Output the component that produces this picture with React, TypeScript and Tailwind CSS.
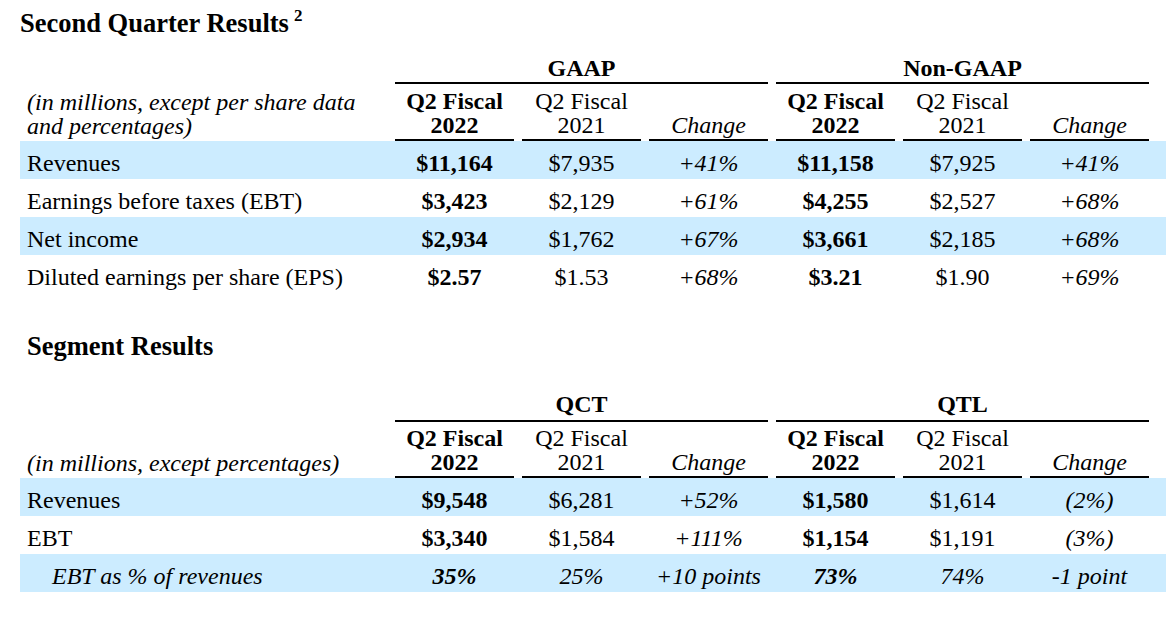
type Cell = { v: string; b?: boolean; i?: boolean };
type Row = { label: string; italic?: boolean; indent?: boolean; hl: boolean; cells: Cell[] };

const GRID = 'grid grid-cols-[367px_repeat(6,119px)] gap-x-2';

const quarterRows: Row[] = [
  {
    label: 'Revenues',
    hl: true,
    cells: [
      { v: '$11,164', b: true }, { v: '$7,935' }, { v: '+41%', i: true },
      { v: '$11,158', b: true }, { v: '$7,925' }, { v: '+41%', i: true },
    ],
  },
  {
    label: 'Earnings before taxes (EBT)',
    hl: false,
    cells: [
      { v: '$3,423', b: true }, { v: '$2,129' }, { v: '+61%', i: true },
      { v: '$4,255', b: true }, { v: '$2,527' }, { v: '+68%', i: true },
    ],
  },
  {
    label: 'Net income',
    hl: true,
    cells: [
      { v: '$2,934', b: true }, { v: '$1,762' }, { v: '+67%', i: true },
      { v: '$3,661', b: true }, { v: '$2,185' }, { v: '+68%', i: true },
    ],
  },
  {
    label: 'Diluted earnings per share (EPS)',
    hl: false,
    cells: [
      { v: '$2.57', b: true }, { v: '$1.53' }, { v: '+68%', i: true },
      { v: '$3.21', b: true }, { v: '$1.90' }, { v: '+69%', i: true },
    ],
  },
];

const segmentRows: Row[] = [
  {
    label: 'Revenues',
    hl: true,
    cells: [
      { v: '$9,548', b: true }, { v: '$6,281' }, { v: '+52%', i: true },
      { v: '$1,580', b: true }, { v: '$1,614' }, { v: '(2%)', i: true },
    ],
  },
  {
    label: 'EBT',
    hl: false,
    cells: [
      { v: '$3,340', b: true }, { v: '$1,584' }, { v: '+111%', i: true },
      { v: '$1,154', b: true }, { v: '$1,191' }, { v: '(3%)', i: true },
    ],
  },
  {
    label: 'EBT as % of revenues',
    italic: true,
    indent: true,
    hl: true,
    cells: [
      { v: '35%', b: true, i: true }, { v: '25%', i: true }, { v: '+10 points', i: true },
      { v: '73%', b: true, i: true }, { v: '74%', i: true }, { v: '-1 point', i: true },
    ],
  },
];

function GroupHeader({ left, right, pb }: { left: string; right: string; pb: string }) {
  return (
    <div className={GRID}>
      <div />
      <div className={`col-span-3 border-b-2 border-black text-center font-bold leading-[24px] ${pb}`}>{left}</div>
      <div className={`col-span-3 border-b-2 border-black text-center font-bold leading-[24px] ${pb}`}>{right}</div>
    </div>
  );
}

function SubHeader({ label, h }: { label: React.ReactNode; h: string }) {
  const cols = [0, 1];
  return (
    <div className={`${GRID} ${h}`}>
      <div className="self-end pl-[7px] pb-[3px] italic leading-[24px] whitespace-nowrap">{label}</div>
      {cols.map((c) => (
        <div key={c} className="contents">
          <div className="flex flex-col justify-end border-b-2 border-black pb-[2px] text-center font-bold leading-[24px]">
            <span>Q2 Fiscal</span>
            <span>2022</span>
          </div>
          <div className="flex flex-col justify-end border-b-2 border-black pb-[2px] text-center leading-[24px]">
            <span>Q2 Fiscal</span>
            <span>2021</span>
          </div>
          <div className="flex flex-col justify-end border-b-2 border-black pb-[2px] text-center italic leading-[24px]">
            <span>Change</span>
          </div>
        </div>
      ))}
    </div>
  );
}

function DataRow({ row }: { row: Row }) {
  return (
    <div className={`${GRID} h-[38px] ${row.hl ? 'bg-[#CCECFF]' : ''}`}>
      <div className={`pt-[6px] leading-[32px] whitespace-nowrap ${row.indent ? 'pl-[32px]' : 'pl-[7px]'} ${row.italic ? 'italic' : ''}`}>
        {row.label}
      </div>
      {row.cells.map((c, idx) => (
        <div
          key={idx}
          className={`pt-[6px] text-center leading-[32px] whitespace-nowrap ${c.b ? 'font-bold' : ''} ${c.i ? 'italic' : ''}`}
        >
          {c.v}
        </div>
      ))}
    </div>
  );
}

export default function App() {
  return (
    <div className="w-[1166px] h-[618px] overflow-hidden bg-white pl-[20px] pt-[10px] text-[24px] text-black font-['Liberation_Serif','Times_New_Roman',serif]">
      {/* Second quarter */}
      <h1 className="h-[26px] text-[26.5px] font-bold leading-[26px] whitespace-nowrap">
        Second Quarter Results
        <sup className="ml-[5px] text-[17px] top-[-11px]">2</sup>
      </h1>
      <div className="mt-[20px]">
        <GroupHeader left="GAAP" right="Non-GAAP" pb="pb-[2px]" />
        <SubHeader
          h="h-[57px]"
          label={
            <>
              (in millions, except per share data
              <br />
              and percentages)
            </>
          }
        />
        {quarterRows.map((r) => (
          <DataRow key={r.label} row={r} />
        ))}
      </div>

      {/* Segments */}
      <h2 className="mt-[40px] h-[26px] pl-[7px] text-[26.5px] font-bold leading-[26px]">Segment Results</h2>
      <div className="mt-[33px]">
        <GroupHeader left="QCT" right="QTL" pb="pb-[4px]" />
        <SubHeader h="h-[56px]" label="(in millions, except percentages)" />
        {segmentRows.map((r) => (
          <DataRow key={r.label} row={r} />
        ))}
      </div>
    </div>
  );
}
